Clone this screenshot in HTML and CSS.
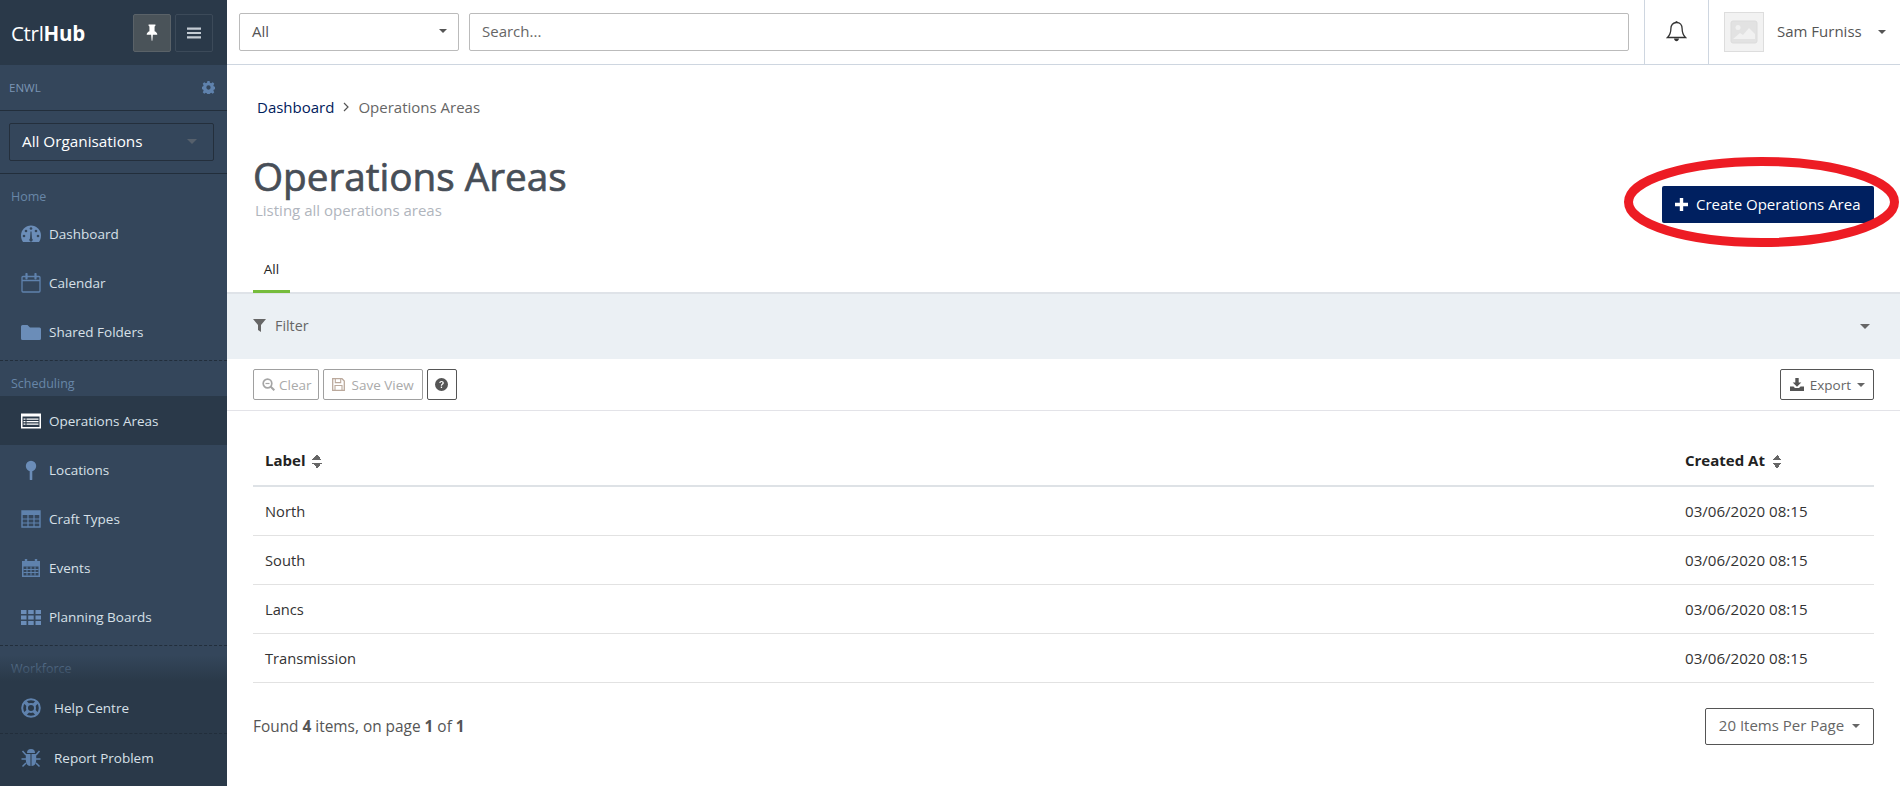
FILE: index.html
```html
<!DOCTYPE html>
<html lang="en">

<head>
    <meta charset="UTF-8">
    <meta name="viewport" content="width=device-width, initial-scale=1.0">
    <title>Operations Areas</title>
    <link rel="stylesheet" href="styles.css">
</head>

<body>

    <aside class="sidebar">
        <div class="brand">
            <div class="logo">Ctrl<b>Hub</b></div>
            <button class="brand-btn active">
                <svg width="12" height="18" viewBox="0 0 14 20"><path d="M3 0h8v1.600L10 2.400V8c1.900.8 3.200 2.200 3.200 4H8l-.6 7h-.8L6 12H.8c0-1.800 1.300-3.200 3.200-4V2.400L3 1.600z" fill="#fff"/></svg>
            </button>
            <button class="brand-btn">
                <svg width="14" height="12" viewBox="0 0 15 12"><path d="M0 0h15v2.400H0zM0 4.800h15v2.400H0zM0 9.600h15V12H0z" fill="#c4ccd4"/></svg>
            </button>
        </div>

        <div class="account">
            <span>ENWL</span>
            <svg width="13" height="13" viewBox="0 0 24 24"><path d="M10 0h4l.7 3.300 2.300 1 2.900-1.800 2.800 2.800L21 8l1 2.300 3 .7v4l-3 .7-1 2.300 1.700 2.900-2.800 2.800-2.900-1.800-2.300 1-.7 3h-4l-.7-3-2.300-1-2.900 1.800-2.800-2.800L3 18l-1-2.300-3-.7v-4l3-.7L3 8 1.300 5.300l2.800-2.800L7 4.300l2.300-1zM12 8a4 4 0 1 0 0 8 4 4 0 0 0 0-8z" fill="#5f82ad" fill-rule="evenodd"/></svg>
        </div>

        <div class="org-wrap">
            <div class="org-select">
                <span>All Organisations</span>
                <i class="caret caret-dim"></i>
            </div>
        </div>

        <nav class="nav">
            <div class="nav-group">
                <div class="nav-title">Home</div>
                <a class="nav-item">
                    <svg class="nav-icon" viewBox="0 0 20 20"><path d="M10 1.500C4.500 1.500 0 6 0 11.500c0 2.500.7 4.700 2 6.500h16c1.300-1.800 2-4 2-6.500 0-5.500-4.500-10-10-10z" fill="#6b8db8"/><path d="M11 14.500a1.700 1.700 0 1 1-2 0l.5-7h1z" fill="#34465b"/><circle cx="3" cy="12" r="1.300" fill="#34465b"/><circle cx="5" cy="7" r="1.300" fill="#34465b"/><circle cx="10" cy="4.500" r="1.300" fill="#34465b"/><circle cx="15" cy="7" r="1.300" fill="#34465b"/><circle cx="17" cy="12" r="1.300" fill="#34465b"/></svg>
                    Dashboard
                </a>
                <a class="nav-item">
                    <svg class="nav-icon" viewBox="0 0 20 20"><path d="M2 3.500h16a1 1 0 0 1 1 1V18a1 1 0 0 1-1 1H2a1 1 0 0 1-1-1V4.500a1 1 0 0 1 1-1zM1 7.500h18" fill="none" stroke="#5f82ad" stroke-width="1.300"/><path d="M5.500 1v4.500M14.500 1v4.500" stroke="#5f82ad" stroke-width="2.200" stroke-linecap="round"/></svg>
                    Calendar
                </a>
                <a class="nav-item">
                    <svg class="nav-icon" viewBox="0 0 20 20"><path d="M0 4.500A1.500 1.500 0 0 1 1.500 3h5L9 5.500h9.500A1.500 1.500 0 0 1 20 7v9.500a1.500 1.500 0 0 1-1.500 1.500h-17A1.500 1.500 0 0 1 0 16.500z" fill="#6b8db8"/></svg>
                    Shared Folders
                </a>
            </div>
            <div class="nav-group">
                <div class="nav-title">Scheduling</div>
                <a class="nav-item current">
                    <svg class="nav-icon" viewBox="0 0 20 20"><path d="M0 2.500h20v15H0z" fill="#fff"/><path d="M1.500 5.500h17v10.500h-17z" fill="#2a3949"/><path d="M2.500 7.500h2v1.200h-2zM2.500 10h2v1.200h-2zM2.500 12.500h2v1.200h-2zM5.500 7.500h12v1.200h-12zM5.500 10h12v1.200h-12zM5.500 12.500h12v1.200h-12z" fill="#fff"/></svg>
                    Operations Areas
                </a>
                <a class="nav-item">
                    <svg class="nav-icon" viewBox="0 0 20 20"><circle cx="10" cy="6" r="5.200" fill="#6b8db8"/><path d="M8.700 10h2.600v9.200a1.300 1.300 0 0 1-2.600 0z" fill="#6b8db8"/></svg>
                    Locations
                </a>
                <a class="nav-item">
                    <svg class="nav-icon" viewBox="0 0 20 20"><path d="M1 2h18v16H1z" fill="none" stroke="#5f82ad" stroke-width="1.400"/><path d="M1 2h18v4H1z" fill="#5f82ad"/><path d="M1 10h18M1 14h18M7 6v12M13 6v12" stroke="#5f82ad" stroke-width="1.200"/></svg>
                    Craft Types
                </a>
                <a class="nav-item">
                    <svg class="nav-icon" viewBox="0 0 20 20"><path d="M1 3h18v16H1z" fill="#5f82ad"/><path d="M5 1v4M15 1v4" stroke="#5f82ad" stroke-width="2.400"/><path d="M2.500 8.500h15v9h-15z" fill="#34465b"/><path d="M2.500 11.500h15M2.500 14.500h15M6 8.500v9M10 8.500v9M14 8.500v9" stroke="#5f82ad"/></svg>
                    Events
                </a>
                <a class="nav-item">
                    <svg class="nav-icon" viewBox="0 0 20 20"><path d="M0 3h5.500v4H0zM7.200 3h5.500v4H7.200zM14.500 3H20v4h-5.500zM0 8.500h5.500v4H0zM7.200 8.500h5.500v4H7.200zM14.500 8.500H20v4h-5.500zM0 14h5.500v4H0zM7.200 14h5.500v4H7.200zM14.500 14H20v4h-5.500z" fill="#6b8db8"/></svg>
                    Planning Boards
                </a>
            </div>
            <div class="nav-group">
                <div class="nav-title">Workforce</div>
            </div>
        </nav>

        <div class="side-footer">
            <a class="foot-item">
                <svg class="nav-icon" viewBox="0 0 20 20"><circle cx="10" cy="10" r="8.800" fill="none" stroke="#5f82ad" stroke-width="2"/><circle cx="10" cy="10" r="4" fill="none" stroke="#5f82ad" stroke-width="2"/><path d="M3.800 3.800l3.400 3.400M16.200 3.800l-3.400 3.400M3.800 16.200l3.400-3.400M16.200 16.200l-3.400-3.400" stroke="#5f82ad" stroke-width="3.600"/></svg>
                Help Centre
            </a>
            <a class="foot-item">
                <svg class="nav-icon" viewBox="0 0 20 20"><path d="M6 5a4 4 0 0 1 8 0z" fill="#5f82ad"/><path d="M4.800 6h4.700v12C6.500 18 4.800 15.500 4.800 12zM10.500 6h4.700v6c0 3.500-1.700 6-4.700 6z" fill="#5f82ad"/><path d="M1.500 3l3.500 4M18.500 3L15 7M.5 11h4.500M19.500 11H15M1.500 18.500l3.500-3.500M18.500 18.500L15 15" stroke="#5f82ad" stroke-width="1.500"/></svg>
                Report Problem
            </a>
        </div>
    </aside>

    <div class="main">
        <header class="topbar">
            <div class="scope-select">
                <span>All</span>
                <i class="caret caret-small"></i>
            </div>
            <input class="search" type="text" placeholder="Search...">
            <div class="bell">
                <svg width="21" height="22" viewBox="0 0 21 22"><path d="M10.500 1.500c-3.600 0-5.600 2.700-5.600 6 0 5-1.400 7-3.400 9h18c-2-2-3.400-4-3.400-9 0-3.300-2-6-5.600-6z" fill="none" stroke="#333" stroke-width="1.300"/><path d="M8 17.500c.3 1.800 1.300 2.800 2.500 2.800s2.200-1 2.500-2.800z" fill="#333"/><path d="M9.500 1.500a1 1 0 0 1 2 0" stroke="#333" fill="none"/></svg>
            </div>
            <div class="user">
                <div class="avatar">
                    <svg width="28" height="24" viewBox="0 0 28 24"><rect x="1" y="1" width="26" height="22" rx="2" fill="#e2e2e2" stroke="#dcdcdc"/><circle cx="8" cy="7.500" r="2.500" fill="#f1f1f1"/><path d="M3 19l7-6 3 2 6-7 6 6v5z" fill="#f1f1f1"/></svg>
                </div>
                <span class="user-name">Sam Furniss</span>
                <i class="caret caret-small"></i>
            </div>
        </header>

        <div class="content">
            <div class="crumbs">
                <a>Dashboard</a>
                <svg width="6" height="10" viewBox="0 0 6 10"><path d="M1 1l4 4-4 4" fill="none" stroke="#555" stroke-width="1.200"/></svg>
                <span>Operations Areas</span>
            </div>

            <div class="page-head">
                <div>
                    <h1>Operations Areas</h1>
                    <p class="subtitle">Listing all operations areas</p>
                </div>
                <div class="create-wrap">
                    <button class="btn-create">
                        <svg width="13" height="13" viewBox="0 0 13 13"><path d="M4.800 0h3.400v4.800H13v3.400H8.200V13H4.800V8.200H0V4.800h4.800z" fill="#fff"/></svg>
                        <span class="create-text">Create Operations Area</span>
                    </button>
                    <svg class="ring" width="277" height="90" viewBox="0 0 277 90"><ellipse cx="138.500" cy="45" rx="133" ry="40.500" fill="none" stroke="#ed1c24" stroke-width="9"/></svg>
                </div>
            </div>

            <div class="tabs">
                <a class="tab">All</a>
            </div>

            <div class="filter-bar">
                <div class="filter-label">
                    <svg width="13" height="13" viewBox="0 0 13 13"><path d="M0 0h13L8 6v7L5 11V6z" fill="#666"/></svg>
                    Filter
                </div>
                <i class="caret caret-grey"></i>
            </div>

            <div class="toolbar">
                <button class="btn btn-muted">
                    <svg width="13" height="13" viewBox="0 0 13 13"><circle cx="5.500" cy="5.500" r="4.300" fill="none" stroke="#a5a5a5" stroke-width="1.700"/><path d="M8.500 8.500l3.800 3.800" stroke="#a5a5a5" stroke-width="2"/><path d="M3.500 5.500h4" stroke="#a5a5a5" stroke-width="1.200"/></svg>
                    Clear
                </button>
                <button class="btn btn-muted btn-save">
                    <svg width="13" height="13" viewBox="0 0 13 13"><path d="M.7.700h9.300l2.300 2.300v9.300H.7z" fill="none" stroke="#bba99c" stroke-width="1.300"/><path d="M3.300 1v3.600h5.400V1M3 12V7.500h7V12" fill="none" stroke="#bba99c" stroke-width="1.100"/></svg>
                    Save View
                </button>
                <button class="btn btn-help">
                    <svg width="13" height="13" viewBox="0 0 13 13"><circle cx="6.500" cy="6.500" r="6.500" fill="#555"/><path d="M4.300 5c0-1.300 1-2 2.200-2s2.300.7 2.300 1.900c0 1.500-1.800 1.500-1.800 2.800H5.800c0-2 1.700-1.900 1.700-2.800 0-.5-.5-.8-1-.8s-1 .3-1 .9z" fill="#fff"/><path d="M5.800 8.600h1.300V10H5.800z" fill="#fff"/></svg>
                </button>
                <button class="btn btn-export">
                    <svg width="14" height="13" viewBox="0 0 14 13"><path d="M5.300 0h3.400v4.500h2.600L7 8.800 2.700 4.500h2.600z" fill="#555"/><path d="M0 8.500h3.500L5 10h4l1.500-1.500H14V13H0z" fill="#555"/></svg>
                    Export
                    <i class="caret caret-grey caret-small"></i>
                </button>
            </div>

            <div class="table-wrap">
                <table class="data-table">
                    <thead>
                        <tr>
                            <th>Label <i class="sort"></i></th>
                            <th class="col-date">Created At <i class="sort"></i></th>
                        </tr>
                    </thead>
                    <tbody>
                        <tr><td>North</td><td class="col-date">03/06/2020 08:15</td></tr>
                        <tr><td>South</td><td class="col-date">03/06/2020 08:15</td></tr>
                        <tr><td>Lancs</td><td class="col-date">03/06/2020 08:15</td></tr>
                        <tr><td>Transmission</td><td class="col-date">03/06/2020 08:15</td></tr>
                    </tbody>
                </table>

                <div class="table-foot">
                    <div class="count">Found <b>4</b> items, on page <b>1</b> of <b>1</b></div>
                    <button class="per-page"><span class="per-page-text">20 Items Per Page</span> <i class="caret caret-grey caret-small"></i></button>
                </div>
            </div>
        </div>
    </div>

</body>

</html>
```

FILE: styles.css
```css
* {
    box-sizing: border-box;
}

body {
    font-family: 'Open Sans', 'Noto Sans', sans-serif;
    font-size: 13.5px;
    color: #333;
    background-color: #fff;
    margin: 0;
    height: 786px;
    overflow: hidden;
    display: flex;
}

button {
    font-family: inherit;
}

.caret {
    display: inline-block;
    width: 0;
    height: 0;
    border-left: 5px solid transparent;
    border-right: 5px solid transparent;
    border-top: 5px solid #555;
}

.caret-dim {
    border-top-color: #56606c;
}

.caret-grey {
    border-top-color: #666;
}

.caret-small {
    border-left-width: 4.5px;
    border-right-width: 4.5px;
    border-top-width: 4.5px;
}

/* sidebar */

.sidebar {
    position: relative;
    width: 227px;
    flex-shrink: 0;
    height: 786px;
    display: flex;
    flex-direction: column;
    background-color: #34465b;
    overflow: hidden;
}

.brand {
    height: 65px;
    flex-shrink: 0;
    background-color: #2a3949;
    display: flex;
    align-items: center;
    padding: 0 14px 0 11px;
    gap: 4px;
}

.logo {
    color: #fff;
    font-size: 20.5px;
    letter-spacing: -0.3px;
    margin-right: auto;
}

.brand-btn {
    width: 38px;
    height: 38px;
    padding: 0;
    background-color: transparent;
    border: 1px solid #3c4a59;
    border-radius: 2px;
    display: flex;
    align-items: center;
    justify-content: center;
}

.brand-btn.active {
    background-color: #4a5359;
    border-color: #5a6268;
}

.account {
    height: 46px;
    flex-shrink: 0;
    display: flex;
    align-items: center;
    justify-content: space-between;
    padding: 0 12px 0 9px;
    color: #7b95b4;
    font-size: 11.5px;
    border-bottom: 1px solid #222e3b;
}

.org-wrap {
    height: 63px;
    flex-shrink: 0;
    padding: 12px 13px 0 9px;
    border-bottom: 1px solid #222e3b;
}

.org-select {
    height: 38px;
    border: 1px solid #242f3c;
    border-radius: 2px;
    display: flex;
    align-items: center;
    justify-content: space-between;
    padding: 0 16px 2px 12px;
    color: #fff;
    font-size: 15.3px;
}

.nav {
    flex: 1;
    overflow: hidden;
}

.nav-group {
    border-bottom: 1px dashed #222e3b;
    height: 187px;
}

.nav-group + .nav-group {
    height: 285px;
}

.nav-group:last-child {
    border-bottom: none;
}

.nav-title {
    height: 35px;
    padding: 14px 0 0 11px;
    color: #6886a8;
    font-size: 12.5px;
}

.nav-item,
.foot-item {
    display: flex;
    align-items: center;
    height: 49px;
    padding-left: 21px;
    color: #d7e0e8;
    font-size: 13.5px;
}

.nav-icon {
    width: 20px;
    height: 20px;
    flex-shrink: 0;
    margin-right: 8px;
}

.nav-item.current {
    background-color: #2a3949;
}

.side-footer {
    position: absolute;
    left: 0;
    right: 0;
    bottom: 0;
    height: 131px;
    padding-top: 28px;
    background: linear-gradient(to bottom, rgba(42, 57, 73, 0) 0, #2a3949 26px);
}

.foot-item {
    height: 50px;
}

.foot-item .nav-icon {
    margin-right: 13px;
}

.foot-item + .foot-item {
    border-top: 1px dashed #222e3b;
    padding-bottom: 2px;
}

/* top bar */

.main {
    flex: 1;
    min-width: 0;
    display: flex;
    flex-direction: column;
}

.topbar {
    height: 65px;
    flex-shrink: 0;
    display: flex;
    align-items: center;
    padding-left: 12px;
    border-bottom: 1px solid #ced6e0;
}

.scope-select {
    width: 220px;
    height: 38px;
    border: 1px solid #bbb;
    border-radius: 2px;
    display: flex;
    align-items: center;
    justify-content: space-between;
    padding: 0 11px 2px 12px;
    color: #555;
    font-size: 15px;
}

.search {
    width: 1160px;
    height: 38px;
    margin-left: 10px;
    border: 1px solid #bbb;
    border-radius: 2px;
    padding: 0 12px 2px;
    font-family: inherit;
    font-size: 15px;
    color: #555;
}

.search::placeholder {
    color: #666;
}

.bell {
    margin-left: 15px;
    width: 65px;
    height: 64px;
    border-left: 1px solid #ced6e0;
    border-right: 1px solid #ced6e0;
    display: flex;
    align-items: center;
    justify-content: center;
}

.user {
    flex: 1;
    display: flex;
    align-items: center;
    padding-left: 15px;
}

.avatar {
    width: 40px;
    height: 40px;
    background-color: #f2f2f2;
    border: 1px solid #ddd;
    display: flex;
    align-items: center;
    justify-content: center;
}

.user-name {
    margin: 0 16px 2px 13px;
    color: #555;
    font-size: 15px;
}

/* content */

.content {
    flex: 1;
    min-height: 0;
}

.crumbs {
    padding: 30px 0 0 30px;
    height: 54px;
    display: flex;
    align-items: center;
    gap: 9px;
    color: #666;
    font-size: 15px;
}

.crumbs a {
    color: #00205b;
}

.page-head {
    display: flex;
    justify-content: space-between;
    align-items: flex-start;
    padding: 0 26px;
    height: 119px;
}

h1 {
    margin: 34px 0 0;
    font-size: 38.7px;
    font-weight: 400;
    line-height: 46px;
    color: #474e57;
    -webkit-text-stroke: 0.7px #474e57;
}

.subtitle {
    margin: 1px 0 0 2px;
    color: #b0b5bd;
    font-size: 15px;
    line-height: 20px;
}

.create-wrap {
    position: relative;
    margin-top: 67px;
}

.btn-create {
    display: flex;
    align-items: center;
    gap: 8px;
    width: 212px;
    height: 37px;
    padding: 0 0 0 13px;
    background-color: #002060;
    color: #fff;
    border: none;
    border-radius: 2px;
    font-size: 15px;
    white-space: nowrap;
}

.create-text {
    margin-bottom: 2px;
}

.ring {
    position: absolute;
    left: -39px;
    top: -29px;
    pointer-events: none;
}

.tabs {
    height: 56px;
    padding-left: 26px;
    border-bottom: 2px solid #dfe3e8;
}

.tab {
    display: block;
    width: 37px;
    height: 55px;
    text-align: center;
    line-height: 62px;
    color: #222;
    font-size: 13.5px;
    border-bottom: 3px solid #76bc3c;
}

.filter-bar {
    height: 65px;
    background-color: #ebf0f4;
    display: flex;
    align-items: center;
    justify-content: space-between;
    padding: 0 30px 0 26px;
}

.filter-label {
    display: flex;
    align-items: center;
    gap: 9px;
    margin-bottom: 2px;
    color: #666;
    font-size: 14.3px;
}

.toolbar {
    height: 52px;
    display: flex;
    align-items: center;
    padding: 0 26px;
    gap: 4px;
    border-bottom: 1px solid #e3e3e8;
}

.btn {
    height: 31px;
    display: flex;
    align-items: center;
    gap: 4px;
    background-color: #fff;
    border: 1px solid #555;
    border-radius: 2px;
    font-size: 13.5px;
    color: #666;
    padding: 0 6px 0 8px;
}

.btn-muted {
    border-color: #a0a0a0;
    color: #aaa;
}

.btn-save {
    gap: 7px;
    padding: 0 8px;
}

.btn-help {
    width: 30px;
    justify-content: center;
    padding: 0;
}

.btn-export {
    margin-left: auto;
    gap: 6px;
    padding: 0 8px 0 9px;
}

/* table */

.table-wrap {
    padding: 0 26px;
}

.data-table {
    width: 100%;
    border-collapse: collapse;
    margin-top: 24px;
}

.data-table th {
    text-align: left;
    height: 51px;
    padding: 0 12px;
    color: #222;
    font-size: 15px;
    border-bottom: 2px solid #dee2e6;
}

.data-table td {
    height: 49px;
    padding: 0 12px;
    color: #333;
    font-size: 14.7px;
    border-bottom: 1px solid #e2e2e2;
}

.data-table td.col-date {
    font-size: 15.1px;
}

.col-date {
    width: 201px;
}

.sort {
    display: inline-block;
    width: 10px;
    height: 13px;
    margin-left: 3px;
    vertical-align: -2px;
    background:
        linear-gradient(to bottom right, transparent 50%, #666 50%) 0 0 / 5px 5px no-repeat,
        linear-gradient(to bottom left, transparent 50%, #666 50%) 5px 0 / 5px 5px no-repeat,
        linear-gradient(to top right, transparent 50%, #666 50%) 0 8px / 5px 5px no-repeat,
        linear-gradient(to top left, transparent 50%, #666 50%) 5px 8px / 5px 5px no-repeat;
}

.table-foot {
    display: flex;
    align-items: center;
    justify-content: space-between;
    margin-top: 25px;
}

.count {
    color: #555;
    font-size: 15.4px;
}

.per-page {
    width: 169px;
    height: 37px;
    background-color: #fff;
    border: 1px solid #555;
    border-radius: 2px;
    color: #666;
    font-size: 15px;
    display: flex;
    align-items: center;
    justify-content: center;
    gap: 8px;
}

.per-page-text {
    margin-bottom: 2px;
}
```
